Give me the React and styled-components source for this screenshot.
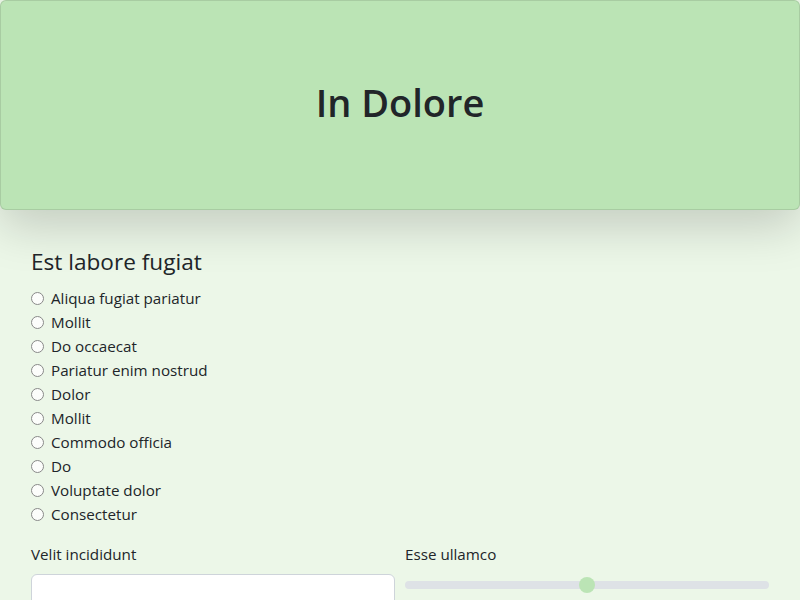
import React from 'react';
import styled, { createGlobalStyle } from 'styled-components';

const GlobalStyle = createGlobalStyle`
  * { box-sizing: border-box; }
  body {
    margin: 0;
    background-color: #ecf7e8;
    font-family: 'Open Sans', 'Noto Sans', sans-serif;
    color: #212529;
    font-size: 15.2px;
    line-height: 1.5;
  }
`;

const Header = styled.header`
  height: 210px;
  display: flex;
  align-items: center;
  justify-content: center;
  padding-bottom: 4px;
  background-color: #bbe4b5;
  border: 1px solid rgba(0, 0, 0, 0.1);
  border-radius: 6px;
  box-shadow: 0 16px 48px rgba(0, 0, 0, 0.175);
  position: relative;
  z-index: 1;
`;

const Title = styled.h1`
  margin: 0;
  font-size: 38px;
  font-weight: 600;
  line-height: 1.2;
`;

const Main = styled.main`
  padding: 38px 31px 32px;
`;

const Question = styled.h4`
  margin: 0 0 11px;
  font-size: 22.6px;
  font-weight: 400;
  line-height: 1.2;
`;

const Options = styled.div`
  display: flex;
  flex-direction: column;
`;

const Option = styled.label`
  display: flex;
  align-items: center;
  height: 24px;
  gap: 7px;

  input {
    margin: 0;
    width: 13px;
    height: 13px;
    opacity: 0.85;
  }
`;

const Fields = styled.div`
  display: grid;
  grid-template-columns: 1fr 1fr;
  gap: 10px;
  margin-top: 16px;
`;

const Field = styled.div`
  display: flex;
  flex-direction: column;
`;

const FieldLabel = styled.label`
  font-size: 15.2px;
  line-height: 24px;
  margin-bottom: 8px;
`;

const TextInput = styled.input`
  height: 38px;
  border: 1px solid #ced4da;
  border-radius: 6px;
  background: #fff;
  font: inherit;
  padding: 6px 12px;
`;

const Range = styled.input`
  appearance: none;
  -webkit-appearance: none;
  width: 100%;
  height: 16px;
  margin: 3px 0 0;
  background: transparent;

  &::-webkit-slider-runnable-track {
    height: 8px;
    background: #dee2e6;
    border-radius: 8px;
  }
  &::-webkit-slider-thumb {
    -webkit-appearance: none;
    width: 16px;
    height: 16px;
    margin-top: -4px;
    border-radius: 50%;
    background: #bbe4b5;
    border: 0;
  }
`;

const options = [
  'Aliqua fugiat pariatur',
  'Mollit',
  'Do occaecat',
  'Pariatur enim nostrud',
  'Dolor',
  'Mollit',
  'Commodo officia',
  'Do',
  'Voluptate dolor',
  'Consectetur',
];

export default function App() {
  return (
    <>
      <GlobalStyle />
      <Header>
        <Title>In Dolore</Title>
      </Header>
      <Main>
        <Question>Est labore fugiat</Question>
        <Options>
          {options.map((o, i) => (
            <Option key={i}>
              <input type="radio" name="q" />
              {o}
            </Option>
          ))}
        </Options>
        <Fields>
          <Field>
            <FieldLabel>Velit incididunt</FieldLabel>
            <TextInput type="text" />
          </Field>
          <Field>
            <FieldLabel>Esse ullamco</FieldLabel>
            <Range type="range" min="0" max="100" defaultValue="50" />
          </Field>
        </Fields>
      </Main>
    </>
  );
}
